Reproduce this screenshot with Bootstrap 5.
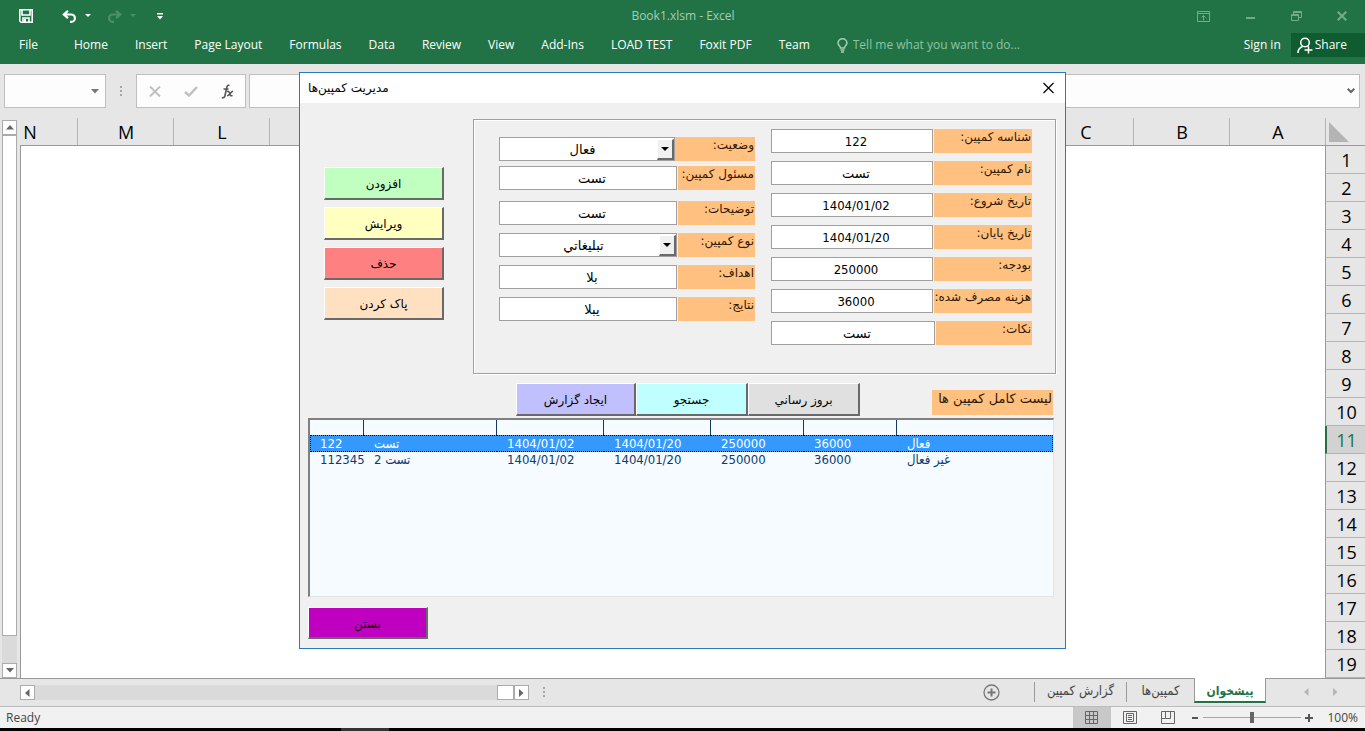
<!DOCTYPE html>
<html lang="en">
<head>
<meta charset="utf-8">
<meta name="viewport" content="width=device-width, initial-scale=1">
<title>Book1.xlsm - Excel</title>
<link href="https://cdn.jsdelivr.net/npm/bootstrap@5.3.0/dist/css/bootstrap.min.css" rel="stylesheet">
<style>
  :root { --ui: "Open Sans", "Noto Sans", "DejaVu Sans Condensed", sans-serif; --form: "DejaVu Sans Condensed", "DejaVu Sans", sans-serif; --farsi: "DejaVu Sans", sans-serif; }
  body { font-family: var(--ui); font-size: 12px; line-height: 16px; background: #e6e6e6; color: #444; }
  button, input, select { font: inherit; color: inherit; border-radius: 0; }
  .plain-btn { border: 0; padding: 0; background: transparent; display: inline-flex; align-items: center; justify-content: center; }
  svg { display: block; flex: none; }

  /* title bar and ribbon */
  .excel-top { background: #217346; color: #fff; }
  .title-row { height: 32px; }
  .title-row .book-title { color: #a5cdb4; }
  .quick-tools { padding-left: 19px; }
  .undo-btn { margin-left: 29px; }
  .redo-btn { margin-left: 16px; }
  .more-btn { margin-left: 21px; }
  .win-tools { color: #6fae87; gap: 35px; padding-right: 18px; }
  .side-box { flex: 1 1 0; }
  .ribbon-row { height: 32px; }
  .ribbon-row a { color: #fff; text-decoration: none; }
  .ribbon-tabs { padding-left: 19px; gap: 27px; height: 26px; }
  .ribbon-tabs .file-tab { margin-right: 9px; }
  .tell-me { color: #a5cdb4; gap: 5px; }
  .tell-me input { border: 0; background: transparent; width: 170px; padding: 0; outline: 0; }
  .tell-me input::placeholder { color: #8fc3a4; opacity: 1; }
  .account-box { height: 26px; gap: 10px; }
  .share-btn { background: #0e5c2f; height: 24px; padding: 0 18px 0 6px; gap: 2px; color: #fff; }

  /* formula bar */
  .formula-row { height: 54px; padding: 10px 5px 10px 4px; }
  .field-box { background: #fdfdfd; border: 1px solid #bfbfbf; height: 34px; }
  .name-box { width: 102px; padding-right: 6px; }
  .name-box input, .formula-box input { border: 0; background: transparent; min-width: 0; outline: 0; }
  .fx-box { width: 110px; margin-right: 3px; }
  .grip { width: 30px; }

  /* worksheet */
  .v-scroll { width: 20px; padding: 2px 3px 0 2px; }
  .sb-btn { width: 15px; height: 15px; background: #fff; border: 1px solid #ababab; color: #666; flex: none; }
  .sb-thumb { background: #fff; border: 1px solid #ababab; }
  .sb-track { background: #dadada; }
  .v-scroll .sb-thumb { flex: 502 1 0; }
  .v-scroll .sb-track { flex: 27 1 0; }
  .h-scroll .sb-thumb { width: 17px; }
  .col-heads { height: 28px; border-bottom: 1px solid #999; direction: rtl; color: #000; font-size: 18px; line-height: 28px; overflow: hidden; }
  .corner-cell { width: 39px; flex: none; padding: 4px 3px; direction: ltr; }
  .col-name { width: 96px; flex: none; text-align: center; border-right: 1px solid #b4b4b4; padding-left: 1px; }
  .cell-area { background: #fff; border-left: 1px solid #999; }
  .row-heads { width: 40px; flex: none; color: #000; font-size: 18px; line-height: 28px; text-align: center; }
  .row-num { height: 28px; border-bottom: 1px solid #b4b4b4; border-left: 1px solid #999; padding-left: 2px; }
  .row-num.current { background: #d2d2d2; color: #217346; border-left: 2px solid #217346; padding-left: 1px; }

  /* sheet tabs */
  .tab-row { height: 28px; border-top: 1px solid #999; padding-left: 20px; }
  .h-scroll { width: 509px; height: 15px; margin-top: 6px; }
  .tab-row .grip { height: 26px; }
  .new-sheet { height: 26px; margin-right: 34px; }
  .sheet-tabs a { color: #444; text-decoration: none; height: 24px; font-family: var(--form); font-size: 13px; line-height: 24px; text-align: center; }
  .tab-line { width: 1px; height: 20px; background: #999; margin-top: 3px; }
  .sheet-tabs a.current { background: #fff; color: #217346; font-size: 12px; line-height: 26px; font-weight: bold; border: 1px solid #999; border-top: 0; border-bottom: 2px solid #217346; width: 72px; margin-top: -1px; height: 25px; }
  .sheet-tabs .tab-a { width: 91px; }
  .sheet-tabs .tab-b { width: 67px; }
  .tab-arrows { width: 99px; padding: 0 27px 0 38px; color: #b5b5b5; height: 26px; }
  .status-row { height: 22px; background: #f1f1f1; border-top: 1px solid #bcbcbc; padding-left: 6px; color: #444; }
  .view-btn { width: 38px; height: 21px; color: #666; }
  .view-btn.current { background: #c8c8c8; }
  .zoom-range { -webkit-appearance: none; appearance: none; width: 98px; height: 14px; margin: 0 4px; background: linear-gradient(#a6a6a6, #a6a6a6) center / 100% 1px no-repeat; }
  .zoom-range::-webkit-slider-thumb { -webkit-appearance: none; width: 4px; height: 11px; background: #666; border: 0; border-radius: 0; }
  .zoom-label { margin: 0 7px 0 14px; }
  .task-edge { height: 3px; background: #000; padding-left: 341px; }
  .task-edge div { width: 48px; height: 3px; background: #333; }

  /* campaign form */
  .form-layer { position: absolute; top: 72px; left: 0; right: 0; }
  .user-form { width: 767px; background: #f0f0f0; border: 1px solid #2c78b8; font-family: var(--form); color: #000; }
  .form-title { background: #fff; height: 30px; padding: 0 10px 0 8px; font-family: var(--farsi); font-size: 12px; }
  .action-col { width: 120px; margin: 48px 29px 0 24px; gap: 7px; }
  .face-btn { border: 1px solid #fff; border-right: 2px solid #696969; border-bottom: 2px solid #696969; height: 33px; padding: 2px 0 0; font-family: var(--farsi); font-size: 12px; line-height: 18px; width: 100%; }
  .bg-add { background: #c0ffc0; } .bg-edit { background: #ffffc0; } .bg-del { background: #ff8080; } .bg-clear { background: #ffe0c0; }
  .bg-report { background: #c0c0ff; } .bg-find { background: #c0ffff; } .bg-renew { background: #e0e0e0; } .bg-close { background: #c000c0; }
  .frame-box { border: 1px solid #a0a0a0; box-shadow: 1px 1px #fff, inset 1px 1px #fff; height: 255px; margin-right: 9px; padding: 9px 23px 0 25px; }
  .left-set { width: 256px; padding-top: 8px; }
  .right-set { width: 261px; }
  .pair-row { display: flex; gap: 1px; height: 24px; margin-bottom: 8px; }
  .pair-row.tight { margin-bottom: 5px; gap: 0; }
  .pair-row.loose { margin-bottom: 11px; }
  .pair-row label { background: #ffc080; color: #301800; flex: 1 1 0; direction: rtl; font-family: var(--farsi); font-size: 12px; line-height: 16px; white-space: nowrap; padding-right: 1px; }
  .entry { border: 1px solid #a0a0a0; background: #fff; height: 24px; width: 178px; padding: 0 0 0 8px; text-align: center; font-size: 13px; line-height: 18px; }
  .entry.farsi, .farsi select { font-family: var(--farsi); }
  .right-set .entry { width: 162px; }
  .right-set .entry.wide { width: 164px; }
  .combo { display: flex; padding: 0; }
  .combo.short { width: 176px; }
  .combo select { appearance: none; border: 0; background: #fff; flex: 1 1 0; min-width: 0; text-align: center; text-align-last: center; padding: 2px 0 0 8px; outline: 0; }
  .combo-arrow { width: 17px; height: 21px; margin-top: 1px; background: #f0f0f0; border: 1px solid #fff; border-right: 2px solid #696969; border-bottom: 2px solid #696969; flex: none; }
  .list-tools { margin: 9px 12px 0 216px; height: 35px; }
  .list-tools .w-a { width: 120px; } .list-tools .w-b { width: 112px; }
  .list-label { background: #ffc080; color: #301800; width: 121px; height: 25px; margin-top: 7px; font-family: var(--farsi); font-size: 13px; line-height: 18px; text-align: right; padding-right: 1px; direction: rtl; white-space: nowrap; }
  .list-box { margin: 0 11px 0 8px; height: 179px; background: #f5fbff; border: 1px solid #e3e3e3; border-top: 2px solid #808080; border-left: 2px solid #808080; color: #0a3c74; }
  .list-box table { table-layout: fixed; width: 100%; border-collapse: separate; border-spacing: 0; font-size: 13px; line-height: 16px; }
  .list-box th { height: 15px; padding: 0; border-right: 1px solid #123a60; }
  .list-box th:last-child { border-right: 0; }
  .list-box td { height: 16px; padding: 0 0 0 10px; white-space: nowrap; }
  .list-box .picked td { background: #3399ff; color: #fff; border: 1px dotted #000; border-width: 1px 0; height: 17px; line-height: 15px; }
  .list-box .picked td:first-child { border-left-width: 1px; padding-left: 9px; }
  .list-box .picked td:last-child { border-right-width: 1px; }
  .close-wrap { width: 120px; margin: 10px 0 9px 8px; }
  .close-wrap .face-btn { height: 32px; }
</style>
</head>
<body>
<div class="d-flex flex-column vh-100 overflow-hidden position-relative">

  <header class="excel-top">
    <div class="title-row d-flex align-items-center">
      <div class="side-box quick-tools d-flex align-items-center">
        <button class="plain-btn" aria-label="Save"><svg width="14" height="14" viewBox="0 0 14 14" fill="none" stroke="#fff" stroke-width="1.6"><path d="M.8.8h12.4v12.4H2L.8 12zM3 1v5h8V1M4 13V9h6v4"/><path d="M6 10v3" stroke-width="2"/></svg></button>
        <button class="plain-btn undo-btn" aria-label="Undo"><svg width="15" height="13" viewBox="0 0 15 13" fill="none" stroke="#fff" stroke-width="2.2"><path d="M6 .8 1.8 4.5 6 8.2M2 4.5h7.2a3.7 3.7 0 0 1 0 7.4H8"/></svg></button>
        <svg class="ms-2" width="6" height="4" fill="#fff"><path d="M0 0h6L3 3z"/></svg>
        <button class="plain-btn redo-btn" aria-label="Redo"><svg width="15" height="13" viewBox="0 0 15 13" fill="none" stroke="#4a9168" stroke-width="2.2"><path d="M9 .8l4.200 3.700L9 8.200M13 4.500H5.800a3.700 3.700 0 0 0 0 7.400H7"/></svg></button>
        <svg class="ms-2" width="6" height="4" fill="#4a9168"><path d="M0 0h6L3 3z"/></svg>
        <button class="plain-btn more-btn" aria-label="Customize toolbar"><svg width="6" height="7" fill="#fff"><path d="M0 0h6v1.400H0zM0 3h6L3 6.500z"/></svg></button>
      </div>
      <div class="book-title">Book1.xlsm - Excel</div>
      <div class="side-box win-tools d-flex align-items-center justify-content-end">
        <button class="plain-btn" aria-label="Ribbon options"><svg width="13" height="11" fill="none" stroke="currentColor"><path d="M.5.5h12v10H.5zM.5 2.500h12M6.500 9.500V5M4.500 6.500l2-2 2 2"/></svg></button>
        <button class="plain-btn" aria-label="Minimize"><svg width="11" height="11" fill="none" stroke="currentColor" stroke-width="2"><path d="M1 7h9"/></svg></button>
        <button class="plain-btn" aria-label="Restore"><svg width="11" height="11" fill="none" stroke="currentColor"><path d="M.5 3.500h7v6h-7zM.5 4.500h7M2.500 3V.5h8v6H8M2.500 1.500h8"/></svg></button>
        <button class="plain-btn" aria-label="Close"><svg width="10" height="10" fill="none" stroke="currentColor" stroke-width="2"><path d="M.7.7l8.600 8.600M9.300.7.7 9.300"/></svg></button>
      </div>
    </div>
    <div class="ribbon-row d-flex">
      <nav class="ribbon-tabs d-flex align-items-center flex-grow-1" aria-label="Ribbon">
        <a class="file-tab" href="#">File</a><a href="#">Home</a><a href="#">Insert</a><a href="#">Page Layout</a><a href="#">Formulas</a><a href="#">Data</a><a href="#">Review</a><a href="#">View</a><a href="#">Add-Ins</a><a href="#">LOAD TEST</a><a href="#">Foxit PDF</a><a href="#">Team</a>
        <div class="tell-me d-flex align-items-center">
          <svg width="11" height="15" fill="none" stroke="currentColor" stroke-width="1.500"><path d="M3.500 10C3.500 8 1 7.500 1 5a4.400 4.200 0 0 1 8.900 0c0 2.500-2.500 3-2.500 5zM3.500 12h4M4 14h3"/></svg>
          <input type="text" aria-label="Tell me what you want to do" placeholder="Tell me what you want to do...">
        </div>
      </nav>
      <div class="account-box d-flex align-items-center">
        <a href="#">Sign in</a>
        <button class="plain-btn share-btn"><svg width="16" height="17" fill="none" stroke="#fff" stroke-width="1.500"><circle cx="8" cy="5.500" r="4.300"/><path d="M1 16c0-3.500 2-5.500 4.500-6.500M10.500 9l1 1M7.500 13h8M11.500 9.500v7"/></svg>Share</button>
      </div>
    </div>
  </header>

  <div class="formula-row d-flex">
    <div class="field-box name-box d-flex align-items-center">
      <input class="flex-grow-1" type="text" aria-label="Name box"><svg width="8" height="5" fill="#777"><path d="M0 0h8L4 4.500z"/></svg>
    </div>
    <div class="grip d-flex align-items-center justify-content-center"><svg width="2" height="11" fill="#a6a6a6"><path d="M0 0h2v2H0zM0 4h2v2H0zM0 8h2v2H0z"/></svg></div>
    <div class="field-box fx-box d-flex align-items-center justify-content-around">
      <button class="plain-btn" aria-label="Cancel"><svg width="12" height="11" fill="none" stroke="#c0c0c0" stroke-width="2"><path d="M1 .5l10 10M11 .5l-10 10"/></svg></button>
      <button class="plain-btn" aria-label="Enter"><svg width="14" height="11" fill="none" stroke="#c0c0c0" stroke-width="2.500"><path d="M1 6l4 3.500L13 1"/></svg></button>
      <button class="plain-btn" aria-label="Insert function"><svg width="13" height="15" fill="none" stroke="#555" stroke-width="1.600"><path d="M8.500 1.500C6.500.5 6 2 5.500 4.500l-1.500 7C3.500 13.800 2.300 14 .8 13.400M2.500 5h5"/><path d="M6 7.500c2-.8 2 .5 2.800 2.500s1.200 2.200 2.700 1.400M12 7.200c-2 0-3.500 4.800-6 4.600"/></svg></button>
    </div>
    <div class="field-box formula-box d-flex align-items-center flex-grow-1 pe-1">
      <input class="flex-grow-1" type="text" aria-label="Formula bar"><svg width="8" height="6" fill="none" stroke="#666" stroke-width="2"><path d="M.7.7 4 4 7.300.7"/></svg>
    </div>
  </div>

  <main class="d-flex flex-grow-1 overflow-hidden">
    <div class="v-scroll d-flex flex-column">
      <button class="plain-btn sb-btn" aria-label="Scroll up"><svg width="8" height="5" fill="currentColor"><path d="M0 4.500h8L4 0z"/></svg></button>
      <div class="sb-thumb"></div><div class="sb-track"></div>
      <button class="plain-btn sb-btn" aria-label="Scroll down"><svg width="8" height="5" fill="currentColor"><path d="M0 0h8L4 4.500z"/></svg></button>
    </div>
    <div class="d-flex flex-column flex-grow-1 overflow-hidden">
      <div class="col-heads d-flex">
        <div class="corner-cell"><svg width="20" height="20" fill="#b4b4b4"><path d="M0 0v20h20z"/></svg></div>
        <div class="col-name">A</div><div class="col-name">B</div><div class="col-name">C</div><div class="col-name"></div><div class="col-name"></div><div class="col-name"></div><div class="col-name"></div><div class="col-name"></div><div class="col-name"></div><div class="col-name"></div><div class="col-name"></div><div class="col-name">L</div><div class="col-name">M</div><div class="col-name">N</div>
      </div>
      <div class="d-flex flex-grow-1 overflow-hidden">
        <div class="cell-area flex-grow-1"></div>
        <div class="row-heads">
          <div class="row-num">1</div><div class="row-num">2</div><div class="row-num">3</div><div class="row-num">4</div><div class="row-num">5</div><div class="row-num">6</div><div class="row-num">7</div><div class="row-num">8</div><div class="row-num">9</div><div class="row-num">10</div><div class="row-num current">11</div><div class="row-num">12</div><div class="row-num">13</div><div class="row-num">14</div><div class="row-num">15</div><div class="row-num">16</div><div class="row-num">17</div><div class="row-num">18</div><div class="row-num">19</div>
        </div>
      </div>
    </div>
  </main>

  <div class="tab-row d-flex">
    <div class="h-scroll d-flex">
      <button class="plain-btn sb-btn" aria-label="Scroll left"><svg width="5" height="8" fill="currentColor"><path d="M4.500 0v8L0 4z"/></svg></button>
      <div class="sb-track flex-grow-1"></div><div class="sb-thumb"></div>
      <button class="plain-btn sb-btn" aria-label="Scroll right"><svg width="5" height="8" fill="currentColor"><path d="M0 0v8l4.500-4z"/></svg></button>
    </div>
    <div class="grip d-flex align-items-center justify-content-center"><svg width="2" height="11" fill="#a6a6a6"><path d="M0 0h2v2H0zM0 4h2v2H0zM0 8h2v2H0z"/></svg></div>
    <nav class="sheet-tabs d-flex ms-auto" aria-label="Sheets">
      <button class="plain-btn new-sheet" aria-label="New sheet"><svg width="17" height="17" fill="none" stroke="#777"><circle cx="8.500" cy="8.500" r="7.500" stroke-width="1.300"/><path d="M4.500 8.500h8M8.500 4.500v8" stroke-width="2"/></svg></button>
      <div class="tab-line"></div><a class="tab-a" href="#">گزارش کمپین</a>
      <div class="tab-line"></div><a class="tab-b" href="#">کمپین‌ها</a>
      <a class="current" href="#">پیشخوان</a>
    </nav>
    <div class="tab-arrows d-flex align-items-center justify-content-between"><svg width="5" height="8" fill="currentColor"><path d="M4.500 0v8L0 4z"/></svg><svg width="5" height="8" fill="currentColor"><path d="M0 0v8l4.500-4z"/></svg></div>
  </div>

  <footer>
    <div class="status-row d-flex align-items-center">
      <span class="me-auto">Ready</span>
      <button class="plain-btn view-btn current" aria-label="Normal view"><svg width="14" height="13" fill="none" stroke="currentColor"><path d="M.5.5h12v12H.5zM4.500.5v12M8.500.5v12M.5 4.500h12M.5 8.500h12"/></svg></button>
      <button class="plain-btn view-btn" aria-label="Page layout view"><svg width="14" height="13" fill="none" stroke="currentColor"><path d="M.5.5h13v12H.5zM3.500 2.500h7v8h-7zM5 4.500h4M5 6.500h4M5 8.500h4"/></svg></button>
      <button class="plain-btn view-btn" aria-label="Page break view"><svg width="14" height="13" fill="none" stroke="currentColor"><path d="M.5.5h13v12H.5zM4.500.5v7h5v-7M.5 7.500h4"/></svg></button>
      <button class="plain-btn ms-1" aria-label="Zoom out"><svg width="8" height="8" stroke="#555" stroke-width="2"><path d="M1 4h6"/></svg></button>
      <input class="zoom-range" type="range" min="10" max="190" value="100" aria-label="Zoom">
      <button class="plain-btn" aria-label="Zoom in"><svg width="8" height="8" stroke="#555" stroke-width="2"><path d="M0 4h8M4 0v8"/></svg></button>
      <span class="zoom-label">100%</span>
    </div>
    <div class="task-edge"><div></div></div>
  </footer>

  <div class="form-layer d-flex justify-content-center">
  <form class="user-form" onsubmit="return false">
    <div class="form-title d-flex align-items-center justify-content-between">
      <span dir="rtl">مدیریت کمپین‌ها</span>
      <button type="button" class="plain-btn" aria-label="Close form"><svg width="13" height="12" fill="none" stroke="#000" stroke-width="1.200"><path d="M1.500 1l10 10M11.500 1l-10 10"/></svg></button>
    </div>
    <div class="d-flex pt-3">
      <div class="action-col d-flex flex-column">
        <button class="face-btn bg-add" dir="rtl">افزودن</button>
        <button class="face-btn bg-edit" dir="rtl">ویرایش</button>
        <button class="face-btn bg-del" dir="rtl">حذف</button>
        <button class="face-btn bg-clear" dir="rtl">پاک کردن</button>
      </div>
      <div class="frame-box d-flex justify-content-between flex-grow-1">
        <div class="left-set">
          <div class="pair-row tight"><div class="entry combo short farsi"><select id="f-status"><option>فعال</option><option>غیر فعال</option></select><span class="combo-arrow d-flex align-items-center justify-content-center"><svg width="8" height="4" fill="#000"><path d="M0 0h8L4 4z"/></svg></span></div><label for="f-status">وضعیت:</label></div>
          <div class="pair-row loose"><input class="entry farsi" id="f-owner" value="تست"><label for="f-owner">مسئول کمپین:</label></div>
          <div class="pair-row"><input class="entry farsi" id="f-desc" value="تست"><label for="f-desc">توضیحات:</label></div>
          <div class="pair-row"><div class="entry combo farsi"><select id="f-kind"><option>تبليغاتي</option></select><span class="combo-arrow d-flex align-items-center justify-content-center"><svg width="8" height="4" fill="#000"><path d="M0 0h8L4 4z"/></svg></span></div><label for="f-kind">نوع کمپین:</label></div>
          <div class="pair-row"><input class="entry farsi" id="f-goal" value="بلا"><label for="f-goal">اهداف:</label></div>
          <div class="pair-row"><input class="entry farsi" id="f-result" value="یبلا"><label for="f-result">نتایج:</label></div>
        </div>
        <div class="right-set">
          <div class="pair-row"><input class="entry" id="f-id" value="122"><label for="f-id">شناسه کمپین:</label></div>
          <div class="pair-row"><input class="entry farsi" id="f-name" value="تست"><label for="f-name">نام کمپین:</label></div>
          <div class="pair-row"><input class="entry" id="f-start" value="1404/01/02"><label for="f-start">تاریخ شروع:</label></div>
          <div class="pair-row"><input class="entry" id="f-end" value="1404/01/20"><label for="f-end">تاریخ پایان:</label></div>
          <div class="pair-row"><input class="entry" id="f-budget" value="250000"><label for="f-budget">بودجه:</label></div>
          <div class="pair-row"><input class="entry" id="f-spent" value="36000"><label for="f-spent">هزینه مصرف شده:</label></div>
          <div class="pair-row"><input class="entry wide farsi" id="f-notes" value="تست"><label for="f-notes">نکات:</label></div>
        </div>
      </div>
    </div>
    <div class="list-tools d-flex">
      <div class="w-a"><button class="face-btn bg-report" dir="rtl">ایجاد گزارش</button></div>
      <div class="w-b"><button class="face-btn bg-find" dir="rtl">جستجو</button></div>
      <div class="w-b"><button class="face-btn bg-renew" dir="rtl">بروز رساني</button></div>
      <div class="list-label ms-auto">لیست کامل کمپین ها</div>
    </div>
    <div class="list-box">
      <table>
        <colgroup><col style="width:54px"><col style="width:133px"><col style="width:107px"><col style="width:107px"><col style="width:93px"><col style="width:93px"><col></colgroup>
        <thead><tr><th></th><th></th><th></th><th></th><th></th><th></th><th></th></tr></thead>
        <tbody>
          <tr class="picked"><td>122</td><td>تست</td><td>1404/01/02</td><td>1404/01/20</td><td>250000</td><td>36000</td><td>فعال</td></tr>
          <tr><td>112345</td><td><span dir="rtl">تست 2</span></td><td>1404/01/02</td><td>1404/01/20</td><td>250000</td><td>36000</td><td>غیر فعال</td></tr>
        </tbody>
      </table>
    </div>
    <div class="close-wrap"><button class="face-btn bg-close" dir="rtl">بستن</button></div>
  </form>
  </div>
</div>
<script src="https://cdn.jsdelivr.net/npm/bootstrap@5.3.0/dist/js/bootstrap.bundle.min.js"></script>
</body>
</html>
